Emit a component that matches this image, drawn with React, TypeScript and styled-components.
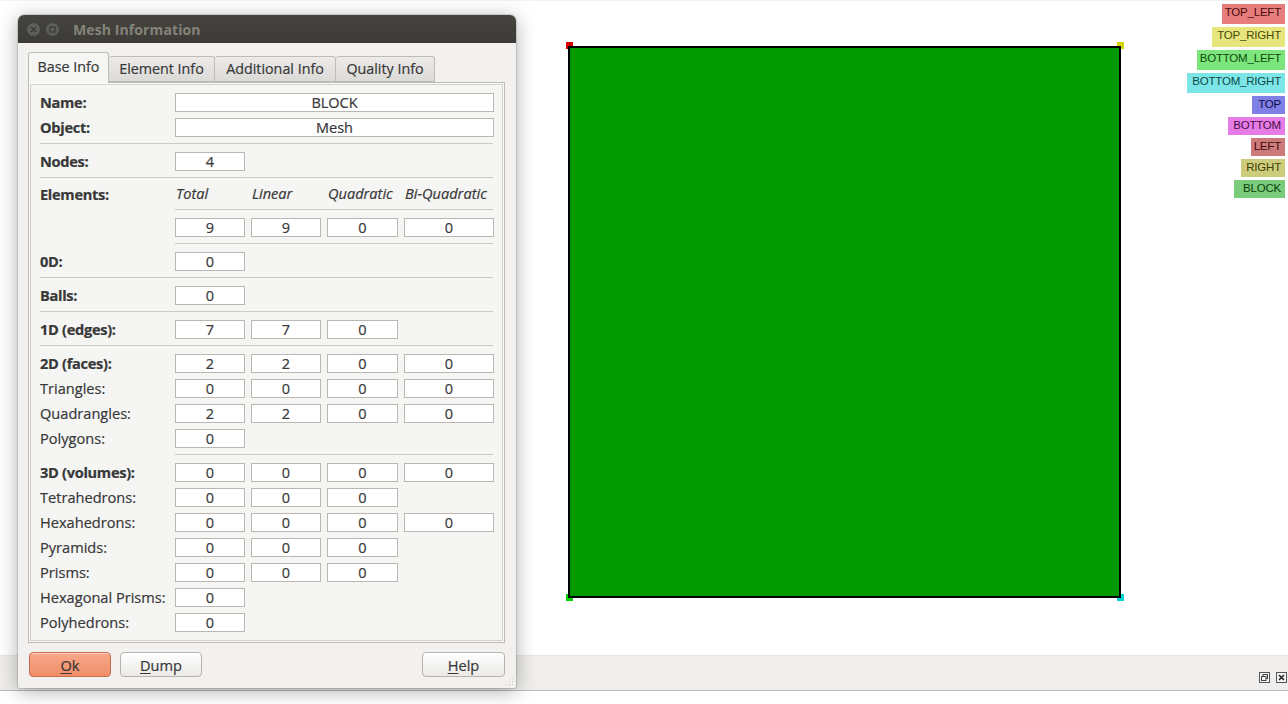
import React from 'react';
import styled, { createGlobalStyle } from 'styled-components';

const GlobalStyle = createGlobalStyle`
  html, body { margin: 0; padding: 0; background: #ffffff; }
  body { font-family: "Open Sans", "DejaVu Sans", sans-serif; color: #383838; }
  #root { width: 1288px; height: 704px; overflow: hidden; }
`;

const Screen = styled.div`
  position: relative;
  width: 1288px;
  height: 704px;
  display: flex;
  flex-direction: column;
`;

const Viewport = styled.div`
  position: relative;
  height: 656px;
  box-sizing: border-box;
  border-top: 1px solid #f2f2f2;
  border-bottom: 1px solid #e6e6e6;
  padding: 45px 0 0 568px;
`;

const Canvas = styled.div`
  position: relative;
  width: 553px;
  height: 552px;
`;

const Square = styled.div`
  position: relative;
  z-index: 1;
  width: 100%;
  height: 100%;
  box-sizing: border-box;
  border: 2px solid #000;
  background: #009900;
`;

const Marker = styled.div<{ $c: string; $x: number; $y: number }>`
  position: absolute;
  width: 7px;
  height: 7px;
  left: ${p => p.$x}px;
  top: ${p => p.$y}px;
  background: ${p => p.$c};
`;

const Legend = styled.div`
  position: absolute;
  top: 3px;
  right: 3px;
  display: flex;
  flex-direction: column;
  align-items: flex-end;
  gap: 3px;
`;

const Tag = styled.div<{ $bg: string; $fg: string; $w: number; $h: number }>`
  width: ${p => p.$w}px;
  height: ${p => p.$h}px;
  box-sizing: border-box;
  background: ${p => p.$bg};
  color: ${p => p.$fg};
  font-family: "Liberation Sans", Arial, sans-serif;
  font-size: 11.5px;
  line-height: 17px;
  text-align: right;
  padding-right: 4px;
  white-space: nowrap;
  letter-spacing: -0.2px;
`;

const StatusStrip = styled.div`
  height: 35px;
  box-sizing: border-box;
  background: #efeeec;
  border-bottom: 1px solid #bdb9b4;
  display: flex;
  justify-content: flex-end;
  align-items: flex-start;
  padding: 16px 1px 0 0;
  gap: 6px;
`;

const Dialog = styled.div`
  position: absolute;
  left: 18px;
  top: 15px;
  width: 498px;
  height: 673px;
  display: flex;
  flex-direction: column;
  background: #f2f1f0;
  border-radius: 6px 6px 2px 2px;
  box-shadow: 0 3px 20px rgba(0, 0, 0, 0.32), 0 0 0 1px rgba(0, 0, 0, 0.12);
  z-index: 5;
  -webkit-text-stroke: 0.2px currentColor;
`;

const TitleBar = styled.div`
  height: 28px;
  flex: none;
  display: flex;
  align-items: center;
  padding-left: 9px;
  border-radius: 6px 6px 0 0;
  background: linear-gradient(#45443f, #3c3b37);
`;

const WinButton = styled.div`
  width: 13px;
  height: 13px;
  border-radius: 50%;
  background: #5f5e5a;
  display: flex;
  align-items: center;
  justify-content: center;
  margin-right: 6px;
`;

const Title = styled.div`
  margin-left: 8px;
  font-weight: 700;
  font-size: 14px;
  color: #858379;
  letter-spacing: 0.1px;
  -webkit-text-stroke: 0;
`;

const Body = styled.div`
  flex: 1;
  display: flex;
  flex-direction: column;
  padding: 9px 11px 11px 10px;
`;

const TabBar = styled.div`
  display: flex;
  align-items: flex-end;
  height: 30px;
`;

const Tab = styled.div<{ $active?: boolean; $w: number }>`
  width: ${p => p.$w}px;
  box-sizing: border-box;
  height: ${p => (p.$active ? 31 : 26)}px;
  margin-bottom: ${p => (p.$active ? -1 : 0)}px;
  position: relative;
  z-index: ${p => (p.$active ? 2 : 1)};
  display: flex;
  align-items: center;
  justify-content: center;
  font-size: 14.3px;
  color: #383838;
  border: 1px solid #bfbbb6;
  border-bottom: ${p => (p.$active ? 'none' : '1px solid #bfbbb6')};
  border-left-width: ${p => (p.$active ? 1 : 0)}px;
  border-radius: 3px 3px 0 0;
  background: ${p => (p.$active ? '#f6f6f5' : 'linear-gradient(#ecebea, #dcdad7)')};
  padding-bottom: ${p => (p.$active ? 3 : 2)}px;
`;

const Pane = styled.div`
  height: 561px;
  box-sizing: border-box;
  border: 1px solid #bdb9b4;
  background: #f5f5f4;
  box-shadow: inset 0 0 0 1px #fbfbfb, inset 0 0 0 2px #d4d0cc;
  padding: 10px 11px 0 11px;
  display: flex;
  flex-direction: column;
`;

const Row = styled.div<{ $h?: number }>`
  display: grid;
  grid-template-columns: 129px 70px 70px 71px 90px;
  column-gap: 6px;
  height: ${p => p.$h ?? 19}px;
  align-items: center;
  & + & {
    margin-top: 6px;
  }
`;

const Label = styled.div<{ $bold?: boolean }>`
  font-size: 14.6px;
  line-height: 17px;
  font-weight: ${p => (p.$bold ? 700 : 400)};
  color: #383838;
  white-space: nowrap;
  letter-spacing: ${p => (p.$bold ? '-0.3px' : '0')};
  margin-top: -1px;
`;

const Field = styled.div<{ $span?: number }>`
  grid-column: span ${p => p.$span ?? 1};
  height: 19px;
  box-sizing: border-box;
  background: #ffffff;
  border: 1px solid #bab6b1;
  font-size: 14.5px;
  line-height: 18px;
  text-align: center;
  color: #383838;
`;

const Head = styled.div`
  font-size: 14.6px;
  line-height: 17px;
  font-style: italic;
  color: #383838;
  padding-left: 1px;
  white-space: nowrap;
  margin-top: -2px;
`;

const Separator = styled.div<{ $indent?: boolean }>`
  height: 1px;
  background: #cdc9c5;
  margin: 6px 0 8px ${p => (p.$indent ? 135 : 0)}px;
  flex: none;
`;

const ButtonRow = styled.div`
  display: flex;
  align-items: center;
  gap: 9px;
  margin-top: 9px;
  padding-left: 1px;
`;

const Button = styled.div<{ $primary?: boolean; $w: number }>`
  width: ${p => p.$w}px;
  height: 25px;
  box-sizing: border-box;
  border-radius: 4px;
  display: flex;
  align-items: center;
  justify-content: center;
  font-size: 14.6px;
  color: #383838;
  border: 1px solid ${p => (p.$primary ? '#c86d4c' : '#b6b2ad')};
  background: ${p =>
    p.$primary ? 'linear-gradient(#f8a88a, #f08d68)' : 'linear-gradient(#ffffff, #ebeae8)'};
  box-shadow: inset 0 1px 0 rgba(255, 255, 255, 0.5);
  & u {
    text-decoration-thickness: 1px;
    text-underline-offset: 2px;
  }
`;

const Spacer = styled.div`
  flex: 1;
`;

const Grip = styled.svg`
  position: absolute;
  right: 2px;
  bottom: 2px;
`;

type Cells = (string | null)[];

const DataRow = ({ label, bold, cells }: { label: string; bold?: boolean; cells: Cells }) => (
  <Row>
    <Label $bold={bold}>{label}</Label>
    {cells.map((c, i) => (c === null ? <span key={i} /> : <Field key={i}>{c}</Field>))}
  </Row>
);

const tags = [
  { t: 'TOP_LEFT', bg: '#e67c7c', fg: '#4a0d0d', w: 63, h: 20 },
  { t: 'TOP_RIGHT', bg: '#e6e67c', fg: '#4a4a0d', w: 73, h: 20 },
  { t: 'BOTTOM_LEFT', bg: '#7ce67c', fg: '#0d4a0d', w: 88, h: 20 },
  { t: 'BOTTOM_RIGHT', bg: '#7ce6e6', fg: '#0d4a4a', w: 98, h: 20 },
  { t: 'TOP', bg: '#7f7fe6', fg: '#0d0d4a', w: 33, h: 18 },
  { t: 'BOTTOM', bg: '#e67ce6', fg: '#4a0d4a', w: 57, h: 18 },
  { t: 'LEFT', bg: '#cc7a7a', fg: '#3f0a0a', w: 34, h: 18 },
  { t: 'RIGHT', bg: '#cccc7a', fg: '#3f3f0a', w: 44, h: 18 },
  { t: 'BLOCK', bg: '#7acc7a', fg: '#0a3f0a', w: 51, h: 18 },
];

export default function App() {
  return (
    <>
      <GlobalStyle />
      <Screen>
        <Viewport>
          <Canvas>
            <Marker $c="#d40000" $x={-2} $y={-4} />
            <Marker $c="#d4d400" $x={549} $y={-4} />
            <Marker $c="#00d400" $x={-2} $y={548} />
            <Marker $c="#00d4d4" $x={549} $y={548} />
            <Square />
          </Canvas>
          <Legend>
            {tags.map(g => (
              <Tag key={g.t} $bg={g.bg} $fg={g.fg} $w={g.w} $h={g.h}>
                {g.t}
              </Tag>
            ))}
          </Legend>
        </Viewport>
        <StatusStrip>
          <svg width="11" height="11" viewBox="0 0 11 11">
            <rect x="0.5" y="0.5" width="10" height="10" fill="#f4f4f4" stroke="#555" />
            <rect x="4" y="2.5" width="4.5" height="4" fill="none" stroke="#444" />
            <rect x="2.5" y="4.5" width="4.5" height="4" fill="#f4f4f4" stroke="#444" />
          </svg>
          <svg width="11" height="11" viewBox="0 0 11 11">
            <rect x="0.5" y="0.5" width="10" height="10" fill="#f4f4f4" stroke="#555" />
            <path d="M3 3 L8 8 M8 3 L3 8" stroke="#222" strokeWidth="1.6" />
          </svg>
        </StatusStrip>

        <Dialog>
          <TitleBar>
            <WinButton>
              <svg width="7" height="7" viewBox="0 0 7 7">
                <path d="M1 1 L6 6 M6 1 L1 6" stroke="#3c3b37" strokeWidth="1.4" />
              </svg>
            </WinButton>
            <WinButton>
              <svg width="7" height="7" viewBox="0 0 7 7">
                <rect x="1" y="1" width="5" height="5" fill="none" stroke="#3c3b37" strokeWidth="1.3" />
              </svg>
            </WinButton>
            <Title>Mesh Information</Title>
          </TitleBar>
          <Body>
            <TabBar>
              <Tab $active $w={81}>Base Info</Tab>
              <Tab $w={106}>Element Info</Tab>
              <Tab $w={121}>Additional Info</Tab>
              <Tab $w={99}>Quality Info</Tab>
            </TabBar>
            <Pane>
              <Row>
                <Label $bold>Name:</Label>
                <Field $span={4}>BLOCK</Field>
              </Row>
              <Row>
                <Label $bold>Object:</Label>
                <Field $span={4}>Mesh</Field>
              </Row>
              <Separator />
              <DataRow label="Nodes:" bold cells={['4']} />
              <Separator />
              <Row $h={17}>
                <Label $bold>Elements:</Label>
                <Head>Total</Head>
                <Head>Linear</Head>
                <Head>Quadratic</Head>
                <Head>Bi-Quadratic</Head>
              </Row>
              <Separator $indent />
              <DataRow label="" cells={['9', '9', '0', '0']} />
              <Separator $indent />
              <DataRow label="0D:" bold cells={['0']} />
              <Separator />
              <DataRow label="Balls:" bold cells={['0']} />
              <Separator />
              <DataRow label="1D (edges):" bold cells={['7', '7', '0']} />
              <Separator />
              <DataRow label="2D (faces):" bold cells={['2', '2', '0', '0']} />
              <DataRow label="Triangles:" cells={['0', '0', '0', '0']} />
              <DataRow label="Quadrangles:" cells={['2', '2', '0', '0']} />
              <DataRow label="Polygons:" cells={['0']} />
              <Separator $indent />
              <DataRow label="3D (volumes):" bold cells={['0', '0', '0', '0']} />
              <DataRow label="Tetrahedrons:" cells={['0', '0', '0']} />
              <DataRow label="Hexahedrons:" cells={['0', '0', '0', '0']} />
              <DataRow label="Pyramids:" cells={['0', '0', '0']} />
              <DataRow label="Prisms:" cells={['0', '0', '0']} />
              <DataRow label="Hexagonal Prisms:" cells={['0']} />
              <DataRow label="Polyhedrons:" cells={['0']} />
            </Pane>
            <ButtonRow>
              <Button $primary $w={82}>
                <span><u>O</u>k</span>
              </Button>
              <Button $w={82}>
                <span><u>D</u>ump</span>
              </Button>
              <Spacer />
              <Button $w={83}>
                <span><u>H</u>elp</span>
              </Button>
            </ButtonRow>
          </Body>
          <Grip width="10" height="10" viewBox="0 0 10 10">
            {[[8, 2], [5, 5], [8, 5], [2, 8], [5, 8], [8, 8]].map(([x, y], i) => (
              <rect key={i} x={x} y={y} width="1" height="1" fill="#c9c6c1" />
            ))}
          </Grip>
        </Dialog>
      </Screen>
    </>
  );
}
